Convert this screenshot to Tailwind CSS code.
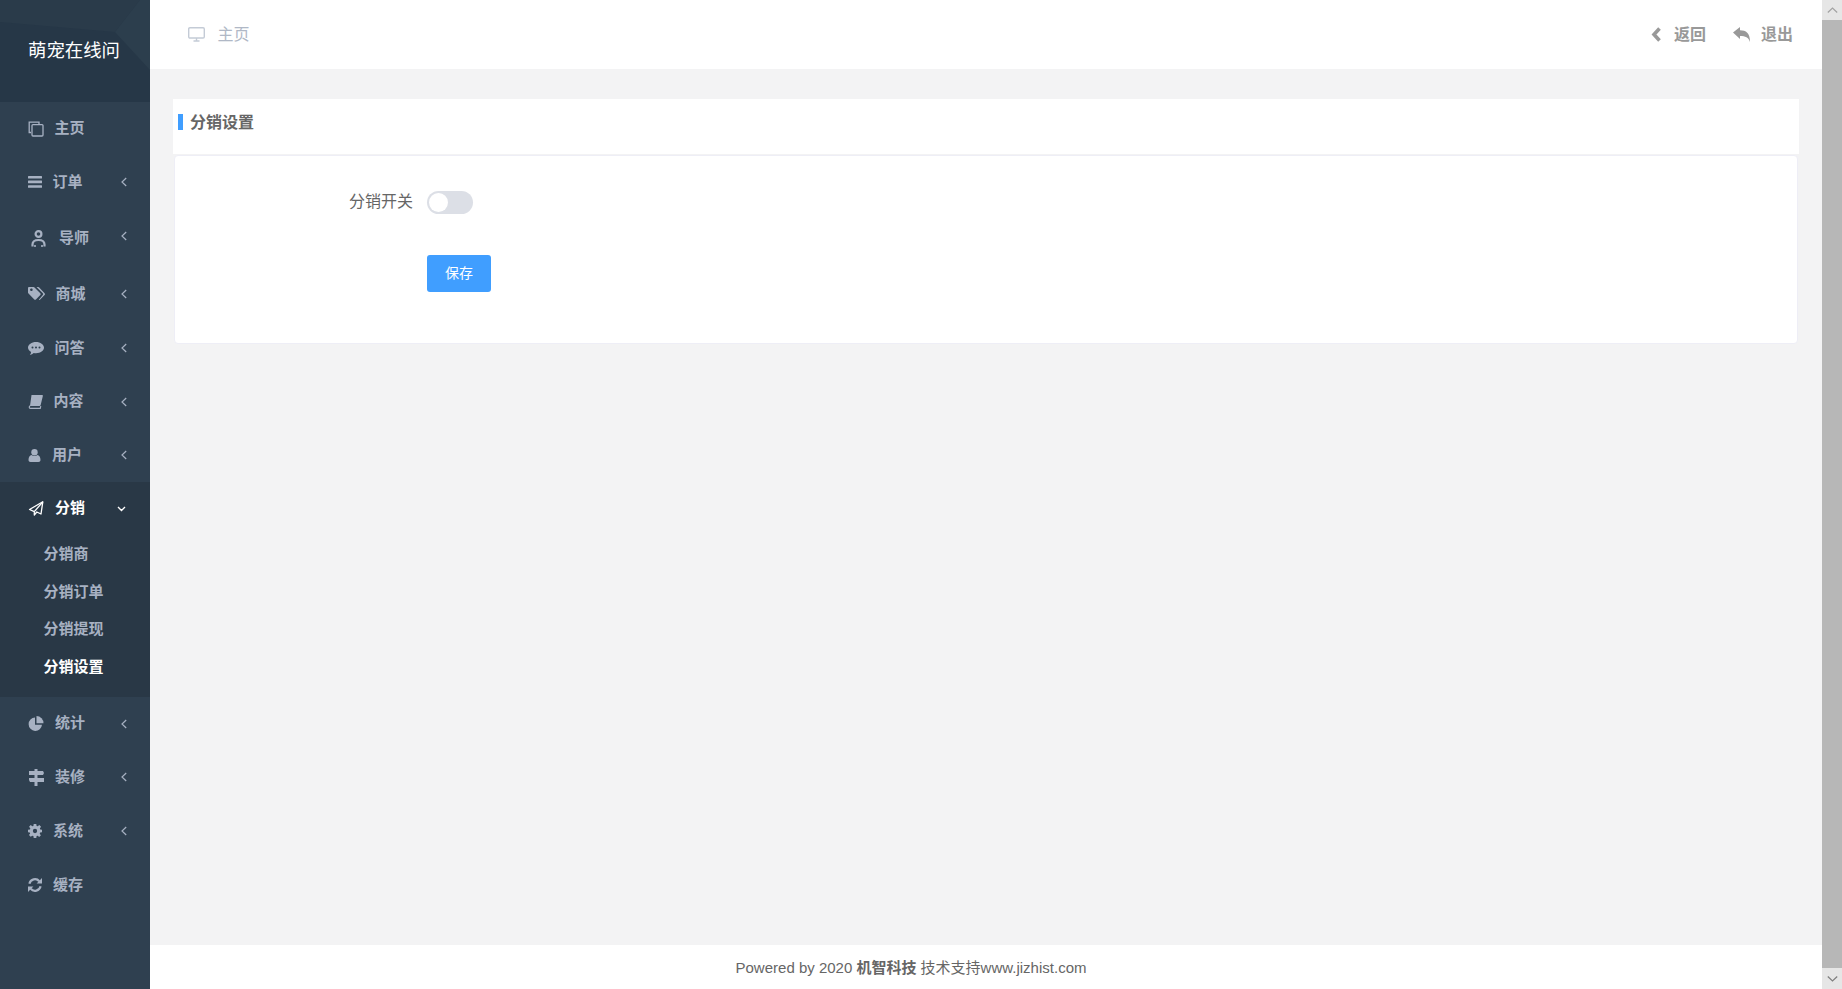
<!DOCTYPE html>
<html lang="zh-CN">
<head>
  <meta charset="UTF-8">
  <meta name="viewport" content="width=device-width, initial-scale=1.0">
  <title>分销设置</title>
  <script src="https://cdn.jsdelivr.net/npm/@tailwindcss/browser@4"></script>
</head>
<body class="h-screen overflow-hidden bg-[#f3f3f4] font-['Liberation_Sans','Noto_Sans_CJK_SC',sans-serif]">
  <div class="flex h-[989px]">
    <!-- Sidebar -->
    <aside class="w-[150px] shrink-0 bg-[#2f4050] text-[15px] font-semibold text-[#a7b1c2]">
      <div class="relative h-[102px] overflow-hidden bg-[#263747]">
        <svg class="absolute inset-0" width="150" height="102" viewBox="0 0 150 102">
          <polygon points="0,0 140,0 115,32 0,22" fill="#2a3b4a"/>
          <polygon points="140,0 150,0 150,70 115,32" fill="#2c3e4d"/>
        </svg>
        <div class="relative pl-[28px] pt-[38px] text-[18.4px] leading-[26px] font-normal text-white">萌宠在线问</div>
      </div>
      <nav>
        <a class="flex h-[53px] items-center pl-[28px]">
          <span class="w-[26.5px]"><svg width="16" height="16" viewBox="0 0 16 16" fill="none" stroke="currentColor" stroke-width="1.3"><path d="M3 11.5H1.2V1.2H11V3"/><rect x="4" y="3.6" width="11" height="11.4" rx="1"/></svg></span>主页
        </a>
        <a class="flex h-[54px] items-center pl-[28px]">
          <span class="w-[24.5px]"><svg width="14" height="12" viewBox="0 0 14 12" fill="currentColor"><rect width="14" height="2.6" rx=".5"/><rect y="4.6" width="14" height="2.6" rx=".5"/><rect y="9.2" width="14" height="2.6" rx=".5"/></svg></span>订单
          <svg class="ml-auto mr-[23px]" width="6" height="10" viewBox="0 0 6 10" fill="none" stroke="currentColor" stroke-width="1.2"><path d="M5.2 1 1 5l4.2 4"/></svg>
        </a>
        <a class="flex h-[58px] items-center pl-[31px]">
          <span class="w-[28px]"><svg width="15" height="17" viewBox="0 0 15 17" fill="none" stroke="currentColor" stroke-width="2.2"><circle cx="7.5" cy="4" r="2.9"/><path d="M1.5 16.500v-2C1.500 11.500 3.500 10 7.500 10s6 1.500 6 4.500v2"/><path d="M4 17v-2M11 17v-2" stroke-width="1.6"/></svg></span>导师
          <svg class="ml-auto mb-[5px] mr-[23px]" width="6" height="10" viewBox="0 0 6 10" fill="none" stroke="currentColor" stroke-width="1.2"><path d="M5.2 1 1 5l4.2 4"/></svg>
        </a>
        <a class="flex h-[54px] items-center pl-[28px]">
          <span class="w-[27.5px]"><svg width="17" height="14" viewBox="0 0 17 14" fill="currentColor"><path d="M0 1.2C0 .5.5 0 1.2 0h4.3c.4 0 .8.2 1 .5l5.8 5.8c.5.5.5 1.2 0 1.6l-4.4 4.5c-.5.5-1.2.5-1.6 0L.5 6.5C.2 6.2 0 5.800 0 5.400Zm3 2.800a1.300 1.300 0 1 0 0-2.500 1.300 1.300 0 0 0 0 2.500Z" fill-rule="evenodd"/><path d="M8.500 0h1.700c.4 0 .8.200 1 .5l5.400 5.800c.5.500.5 1.200 0 1.600l-4.400 4.700c-.4.400-1 .400-1.400.100l4-4.800c.5-.5.5-1.200 0-1.700Z"/></svg></span>商城
          <svg class="ml-auto mr-[23px]" width="6" height="10" viewBox="0 0 6 10" fill="none" stroke="currentColor" stroke-width="1.2"><path d="M5.2 1 1 5l4.2 4"/></svg>
        </a>
        <a class="flex h-[54px] items-center pl-[28px]">
          <span class="w-[26.5px]"><svg width="16" height="13" viewBox="0 0 16 13" fill="currentColor"><path fill-rule="evenodd" d="M8 0c4.400 0 8 2.500 8 5.600s-3.600 5.600-8 5.600c-.8 0-1.500-.1-2.200-.2C4.700 12 3.400 12.700 1.800 13c.7-.8 1.200-1.800 1.300-3C1.200 9 0 7.400 0 5.600 0 2.500 3.600 0 8 0ZM4.500 4.600a1 1 0 1 0 0 2 1 1 0 0 0 0-2Zm3.500 0a1 1 0 1 0 0 2 1 1 0 0 0 0-2Zm3.500 0a1 1 0 1 0 0 2 1 1 0 0 0 0-2Z"/></svg></span>问答
          <svg class="ml-auto mr-[23px]" width="6" height="10" viewBox="0 0 6 10" fill="none" stroke="currentColor" stroke-width="1.2"><path d="M5.2 1 1 5l4.2 4"/></svg>
        </a>
        <a class="flex h-[53px] items-center pl-[28px]">
          <span class="w-[25.5px]"><svg width="15" height="14" viewBox="0 0 15 14" fill="none"><path fill="currentColor" d="M3.500 0H14c.7 0 1 .5.800 1.200l-2.200 9c-.1.500-.5.800-1 .8H2Z"/><path stroke="currentColor" stroke-width="1.200" d="M2.200 10.800c-1.200.4-1.400 2.600.2 2.600h9.800l.6-2.200"/></svg></span>内容
          <svg class="ml-auto mr-[23px]" width="6" height="10" viewBox="0 0 6 10" fill="none" stroke="currentColor" stroke-width="1.2"><path d="M5.2 1 1 5l4.200 4"/></svg>
        </a>
        <a class="flex h-[54px] items-center pl-[28px]">
          <span class="w-[24px]"><svg width="13" height="13" viewBox="0 0 12 13" fill="currentColor"><circle cx="6" cy="3.300" r="3.200"/><path d="M0 11c0-3 1.300-4.700 3-5 .8.700 1.800 1 3 1s2.200-.3 3-1c1.700.3 3 2 3 5 0 1.200-.8 2-2 2H2c-1.200 0-2-.8-2-2Z"/></svg></span>用户
          <svg class="ml-auto mr-[23px]" width="6" height="10" viewBox="0 0 6 10" fill="none" stroke="currentColor" stroke-width="1.2"><path d="M5.200 1 1 5l4.200 4"/></svg>
        </a>
        <!-- active group -->
        <div class="h-[215px] bg-[#293846]">
          <a class="flex h-[53px] items-center pl-[28px] text-white">
            <span class="w-[27px]"><svg width="16" height="15" viewBox="0 0 15 15" fill="none" stroke="currentColor" stroke-width="1.300" stroke-linejoin="round"><path d="M14.300.8 12.500 13 8.300 11 5.800 14V10.700L1 8.500Z"/><path d="M14.300.8 5.800 10.700"/></svg></span>分销
            <svg class="ml-auto mr-[24px]" width="9" height="6" viewBox="0 0 9 6" fill="none" stroke="currentColor" stroke-width="1.400"><path d="M1 1l3.500 3.500L8 1"/></svg>
          </a>
          <a class="block pl-[43.5px] leading-[37.500px]">分销商</a>
          <a class="block pl-[43.5px] leading-[37.500px]">分销订单</a>
          <a class="block pl-[43.5px] leading-[37.500px]">分销提现</a>
          <a class="block pl-[43.5px] leading-[37.500px] text-white">分销设置</a>
        </div>
        <a class="flex h-[53px] items-center pl-[28px]">
          <span class="w-[27px]"><svg width="16" height="15" viewBox="0 0 15 15" fill="currentColor"><path d="M6.500 1.500a6.700 6.700 0 1 0 7 7.300H6.500Z"/><path d="M8 0v7.300h7A7.200 7.200 0 0 0 8 0Z"/></svg></span>统计
          <svg class="ml-auto mr-[23px]" width="6" height="10" viewBox="0 0 6 10" fill="none" stroke="currentColor" stroke-width="1.200"><path d="M5.200 1 1 5l4.200 4"/></svg>
        </a>
        <a class="flex h-[54px] items-center pl-[29px]">
          <span class="w-[26px]"><svg width="15" height="17" viewBox="0 0 15 17" fill="currentColor"><path d="M5.500 0h3v17h-3Z"/><path d="M0 2h14l1 2-1 2H0ZM0 9h15v4H1l-1-2Z"/></svg></span>装修
          <svg class="ml-auto mr-[23px]" width="6" height="10" viewBox="0 0 6 10" fill="none" stroke="currentColor" stroke-width="1.200"><path d="M5.200 1 1 5l4.200 4"/></svg>
        </a>
        <a class="flex h-[54px] items-center pl-[28px]">
          <span class="w-[25px]"><svg width="14" height="14" viewBox="0 0 13 13" fill="currentColor"><path fill-rule="evenodd" d="M5.300 0h2.400l.3 1.800 1 .4L10.500 1l1.600 1.600-1.100 1.500.4 1 1.600.3v2.300l-1.700.3-.4 1 1.100 1.500-1.600 1.600L9 10.800l-1 .4-.3 1.800H5.300l-.3-1.800-1-.4-1.500 1.100-1.600-1.600 1.100-1.500-.4-1L0 7.700V5.400l1.800-.3.400-1L1 2.600 2.500 1l1.500 1.200 1-.4ZM6.500 4.500a2 2 0 1 0 0 4 2 2 0 0 0 0-4Z"/></svg></span>系统
          <svg class="ml-auto mr-[23px]" width="6" height="10" viewBox="0 0 6 10" fill="none" stroke="currentColor" stroke-width="1.200"><path d="M5.200 1 1 5l4.200 4"/></svg>
        </a>
        <a class="flex h-[54px] items-center pl-[28px]">
          <span class="w-[25px]"><svg width="14" height="14" viewBox="0 0 13 13" fill="none" stroke="currentColor" stroke-width="2"><path d="M1.300 5.300A5.300 5.300 0 0 1 10.500 3"/><path d="M11.700 7.700A5.300 5.300 0 0 1 2.500 10"/><path d="M13 0v5H8ZM0 13V8h5Z" fill="currentColor" stroke="none"/></svg></span>缓存
        </a>
      </nav>
    </aside>

    <!-- Main -->
    <main class="flex min-w-0 flex-1 flex-col">
      <header class="flex h-[69px] shrink-0 items-center bg-white pl-[38px] pr-[29px] text-[16px]">
        <svg class="mr-[12.5px]" width="17" height="15" viewBox="0 0 17 15" fill="none" stroke="#c4cbd6" stroke-width="1.400"><rect x=".7" y=".7" width="15.600" height="10.300" rx="1.200"/><path d="M8.500 11v3M5.500 14h6"/></svg>
        <span class="text-[#b0b8c6]">主页</span>
        <div class="ml-auto flex items-center font-semibold text-[#999]">
          <svg class="mr-[13px]" width="10" height="15" viewBox="0 0 10 15" fill="none" stroke="currentColor" stroke-width="3.600"><path d="M8.500 1.500 3 7.500l5.500 6"/></svg>
          <span>返回</span>
          <svg class="ml-[27px] mr-[11px]" width="17" height="15" viewBox="0 0 17 15" fill="currentColor"><path d="M0 5.500 7 0v3.300C13 3.300 17 6 17 15c-1.500-4.700-4.500-6-10-6v3Z"/></svg>
          <span>退出</span>
        </div>
      </header>

      <div class="flex-1 px-[23px] pt-[30px]">
        <div class="flex h-[55px] items-center bg-white pb-[9px] pl-[5px]">
          <span class="mr-[7px] h-4 w-[5px] bg-[#409eff]"></span>
          <h2 class="mt-[2px] text-[16px] font-semibold text-[#666]">分销设置</h2>
        </div>
        <div class="mx-px mt-px h-[189px] rounded border border-[#eeeef6] bg-white pt-[35px]">
          <div class="flex h-[23px] items-center">
            <label class="mb-px w-[252px] pr-[14px] text-right text-[16px] text-[#666]">分销开关</label>
            <span class="flex h-[23px] w-[46px] items-center rounded-full bg-[#dcdfe6] pl-[2px]">
              <span class="h-[19px] w-[19px] rounded-full bg-white"></span>
            </span>
          </div>
          <button class="ml-[252px] mt-[41px] h-[37px] w-[64px] rounded-[3px] bg-[#409eff] text-[14px] text-white">保存</button>
        </div>
      </div>

      <footer class="flex h-[44px] shrink-0 items-center justify-center bg-white pr-[150px] pt-[2px] text-[15px] text-[#666]">
        <span class="whitespace-pre">Powered by 2020 <b class="font-bold">机智科技</b> 技术支持www.jizhist.com</span>
      </footer>
    </main>

    <!-- Scrollbar -->
    <div class="flex w-[20px] shrink-0 flex-col bg-[#f1f1f1]">
      <div class="flex h-[20px] items-center justify-center bg-[#e6e6e6]">
        <svg width="11" height="6" viewBox="0 0 11 6" fill="none" stroke="#a3a3a3" stroke-width="1.200"><path d="M.8 5.500 5.500 1l4.700 4.500"/></svg>
      </div>
      <div class="flex-1 bg-[#b7b7b7]"></div>
      <div class="flex h-[21px] items-center justify-center bg-[#e6e6e6]">
        <svg width="11" height="6" viewBox="0 0 11 6" fill="none" stroke="#7f7f7f" stroke-width="1.200"><path d="M.8.500 5.500 5l4.700-4.500"/></svg>
      </div>
    </div>
  </div>
</body>
</html>
